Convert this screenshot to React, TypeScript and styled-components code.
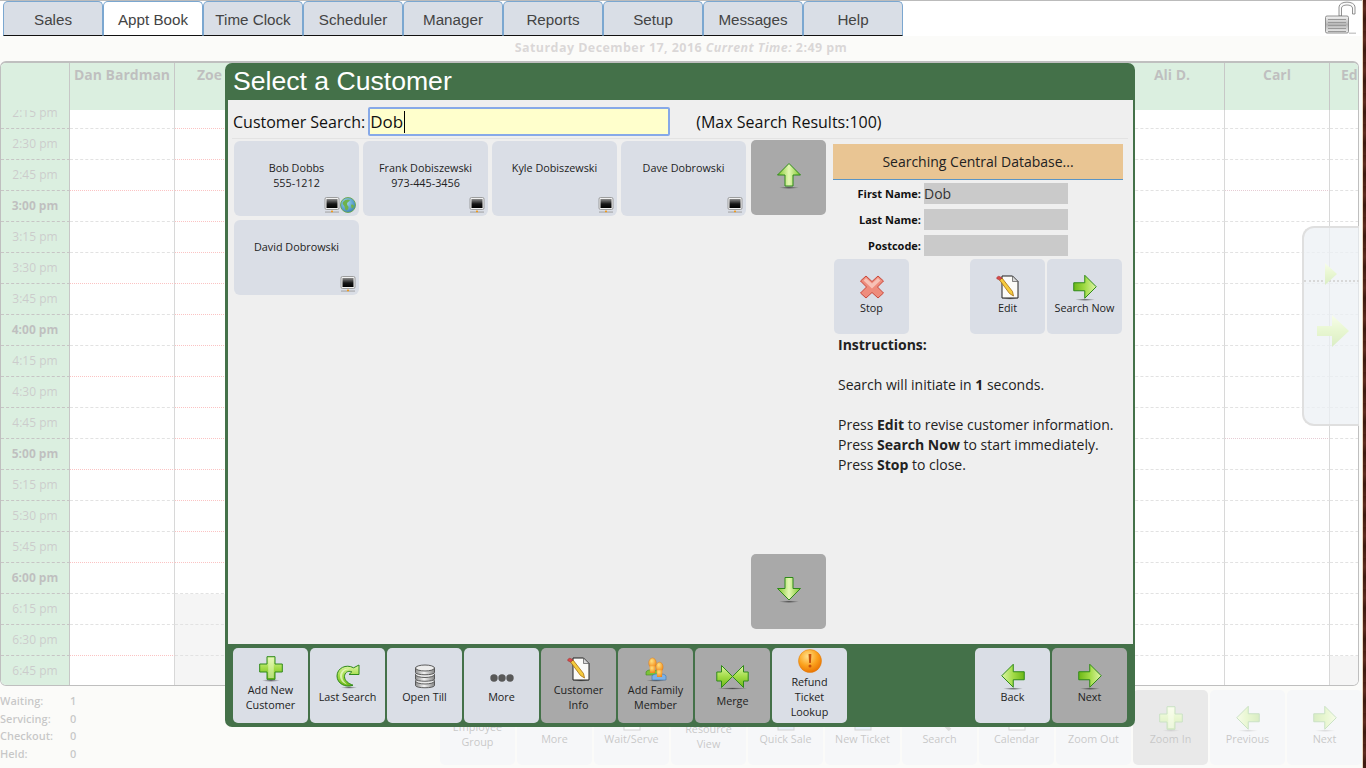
import { ReactNode } from 'react';
import styled, { createGlobalStyle } from 'styled-components';

const GlobalStyle = createGlobalStyle`
	html {
		background: repeating-linear-gradient(180deg, #4a1f14 0, #5f2c20 9px, #3d1a10 19px, #54261a 31px);
	}
	body {
		margin: 0;
		width: 1363px;
		height: 768px;
		overflow: hidden;
		font-family: 'Open Sans', 'Liberation Sans', sans-serif;
	}
`;

const Page = styled.div`
	position: relative;
	width: 1363px;
	height: 768px;
	overflow: hidden;
	box-sizing: border-box;
	border-right: 1px solid #ead9c2;
	background: #efefe7;
`;

/* ---- top tabs ---- */

const TopBar = styled.div`
	position: relative;
	z-index: 3;
	display: flex;
	justify-content: space-between;
	height: 36px;
	box-sizing: border-box;
	padding: 0 5px 0 3px;
	background: #fff;
	border-top: 1px solid #bbb;
`;

const Tabs = styled.div`
	display: flex;
`;

const Tab = styled.div<{ $active?: boolean }>`
	width: 100px;
	box-sizing: border-box;
	display: flex;
	align-items: center;
	justify-content: center;
	height: 35px;
	padding-top: 2px;
	border: 1px solid #7ba7d0;
	border-bottom: 1px solid #111;
	border-radius: 5px 5px 0 0;
	background: ${p => (p.$active ? '#fff' : '#d9dee6')};
	color: #444;
	font: 15.2px 'Liberation Sans', Arial, sans-serif;
`;

const DateLine = styled.div`
	height: 25px;
	line-height: 23px;
	text-align: center;
	font-size: 12.5px;
	font-weight: 700;
	letter-spacing: 0.43px;
	color: #6b6060;
`;

/* ---- calendar behind the dialog ---- */

const Calendar = styled.div`
	width: 1359px;
	height: 625px;
	box-sizing: border-box;
	overflow: hidden;
	background: #fff;
	border: 1px solid #000;
	border-top-width: 2px;
	border-radius: 6px;
`;

const HeadRow = styled.div`
	position: relative;
	z-index: 1;
	display: flex;
	height: 47px;
`;

const TimeHead = styled.div`
	flex: 0 0 69px;
	box-sizing: border-box;
	background: #6fbf83;
	border-right: 1px solid #222;
`;

const ColHead = styled.div<{ $inset?: number }>`
	flex: 0 0 105px;
	box-sizing: border-box;
	padding: 2px 0 0 ${p => p.$inset ?? 0}px;
	text-align: ${p => (p.$inset ? 'left' : 'center')};
	background: #6fbf83;
	border-right: 1px solid #222;
	font-size: 14px;
	line-height: 20px;
	font-weight: 700;
	color: #000;
`;

const Rows = styled.div`
	margin-top: -12px;
`;

const Row = styled.div`
	display: flex;
	height: 31px;
`;

const TimeCell = styled.div<{ $hour: boolean }>`
	flex: 0 0 69px;
	box-sizing: border-box;
	background: #6fbf83;
	border-right: 1px solid #222;
	border-bottom: 1px dashed #201818;
	text-align: center;
	font-size: 12px;
	line-height: 30px;
	font-weight: ${p => (p.$hour ? 700 : 400)};
	color: ${p => (p.$hour ? '#000' : '#333')};
`;

const Slot = styled.div<{ $line: 'dash' | 'red' | 'plum'; $off: boolean }>`
	flex: 0 0 105px;
	box-sizing: border-box;
	background: ${p => (p.$off ? '#d7d7d7' : '#fff')};
	border-right: 1px solid #646464;
	border-bottom: 1px ${p => (p.$line === 'dash' ? 'dashed' : 'dotted')}
		${p => (p.$line === 'dash' ? '#8c8c8c' : p.$line === 'red' ? '#ee1111' : '#9b3753')};
`;

const BottomBar = styled.div`
	display: flex;
	justify-content: space-between;
	height: 82px;
	box-sizing: border-box;
	padding-top: 4px;
`;

const Stats = styled.div`
	display: grid;
	grid-template-columns: 70px auto;
	grid-auto-rows: 17.7px;
	align-content: start;
	padding-top: 2px;
	font-size: 11px;
	line-height: 18px;
	font-weight: 600;
	color: #222;
`;

const BackTools = styled.div`
	display: flex;
	gap: 2px;
	align-items: flex-start;
`;

const SidePanel = styled.div`
	position: absolute;
	z-index: 1;
	top: 226px;
	left: 1302px;
	width: 57px;
	height: 200px;
	box-sizing: border-box;
	display: flex;
	flex-direction: column;
	background: rgba(180, 196, 214, 0.75);
	border: 2px solid #808080;
	border-right: 0;
	border-radius: 12px 0 0 12px;
`;

const PanelTop = styled.div`
	height: 52px;
	display: flex;
	align-items: flex-end;
	padding-left: 21px;
	border-bottom: 2px dotted #666;
`;

const SmallArrow = styled.svg`
	margin-bottom: -5px;
`;

const PanelBottom = styled.div`
	flex: 1;
	display: flex;
	align-items: center;
	justify-content: center;
	padding: 0 0 44px 2px;
`;

const Mask = styled.div`
	position: absolute;
	z-index: 2;
	inset: 36px 0 0 0;
	background: rgba(255, 255, 255, 0.75);
`;

/* ---- dialog ---- */

const Modal = styled.div`
	position: absolute;
	z-index: 4;
	top: 63px;
	left: 225px;
	width: 910px;
	height: 664px;
	display: flex;
	flex-direction: column;
	background: #447149;
	border-radius: 7px;
`;

const Title = styled.div`
	height: 37px;
	padding-left: 8px;
	color: #fff;
	font: 26.6px/37px 'Liberation Sans', Arial, sans-serif;
`;

const Body = styled.div`
	flex: 1;
	margin: 0 2px 0 3px;
	min-height: 0;
	background: #efefef;
	color: #111;
`;

const SearchRow = styled.div`
	display: flex;
	align-items: center;
	height: 39px;
	box-sizing: border-box;
	margin: 0 5px 0 4px;
	padding: 5px 0 0 1px;
	border-bottom: 1px solid #e3e3e3;
	font-size: 16px;
`;

const SearchBox = styled.div`
	width: 302px;
	height: 29px;
	margin: 0 26px 0 3px;
	box-sizing: border-box;
	display: flex;
	align-items: center;
	background: #ffffcc;
	border: 2px solid #87a9e8;
	border-radius: 2px;
	font-size: 17px;
`;

const Caret = styled.span`
	display: inline-block;
	width: 1px;
	height: 22px;
	margin-left: 1px;
	background: #000;
`;

const Main = styled.div`
	display: flex;
	height: 505px;
	padding-left: 6px;
`;

const Results = styled.div`
	width: 517px;
	padding-top: 2px;
	display: flex;
	flex-wrap: wrap;
	align-content: flex-start;
	gap: 4px;
`;

const Card = styled.div`
	position: relative;
	width: 125px;
	height: 75px;
	box-sizing: border-box;
	padding-top: 19px;
	text-align: center;
	background: #dadee6;
	border-radius: 6px;
	font-size: 10.8px;
	line-height: 15px;
	color: #222;
`;

const CardBadges = styled.div`
	position: absolute;
	right: 3px;
	bottom: 3px;
	display: flex;
	height: 16px;
`;

const ScrollCol = styled.div`
	width: 75px;
	height: 489px;
	padding-top: 1px;
	display: flex;
	flex-direction: column;
	justify-content: space-between;
`;

const Side = styled.div`
	width: 290px;
	margin-left: 7px;
	padding-top: 5px;
	font-size: 14px;
	line-height: 20px;
	color: #222;
`;

const Status = styled.div`
	height: 36px;
	box-sizing: border-box;
	text-align: center;
	line-height: 35px;
	background: #e9c593;
	border-bottom: 1px solid #5b95c5;
`;

const Form = styled.div`
	display: grid;
	grid-template-columns: 88px 144px;
	grid-auto-rows: 21px;
	column-gap: 3px;
	row-gap: 5px;
	margin-top: 3px;
`;

const Label = styled.div`
	text-align: right;
	font-size: 11px;
	font-weight: 700;
	line-height: 21px;
	color: #111;
`;

const Field = styled.div`
	background: #cacaca;
	font-size: 14px;
	line-height: 21px;
	color: #333;
`;

const Actions = styled.div`
	display: flex;
	gap: 2px;
	margin: 3px 1px 1px;
	& > :first-child {
		margin-right: auto;
	}
`;

const Help = styled.div`
	padding-left: 5px;
	p {
		margin: 0 0 20px;
	}
`;

const Footer = styled.div`
	display: flex;
	gap: 2px;
	height: 83px;
	box-sizing: border-box;
	padding: 4px 8px;
`;

const FooterGap = styled.div`
	flex: 1;
`;

const Tool = styled.div<{ $gray?: boolean }>`
	flex: 0 0 75px;
	width: 75px;
	height: 75px;
	box-sizing: border-box;
	padding-bottom: 3px;
	display: flex;
	flex-direction: column;
	align-items: center;
	justify-content: center;
	text-align: center;
	background: ${p => (p.$gray ? '#a9a9a9' : '#dadee6')};
	border-radius: 5px;
	font-size: 10.8px;
	line-height: 15px;
	color: #222;
`;

const IconSlot = styled.div<{ $h: number }>`
	height: ${p => p.$h}px;
	display: flex;
	align-items: center;
	justify-content: center;
`;

/* ---- icons ---- */

function Defs() {
	return (
		<svg width="0" height="0" style={{ position: 'absolute' }}>
			<defs>
				<linearGradient id="leaf" x1="0" y1="0" x2="0" y2="1">
					<stop offset="0" stopColor="#dff5a8" />
					<stop offset="0.5" stopColor="#a3dc48" />
					<stop offset="1" stopColor="#6cb716" />
				</linearGradient>
				<linearGradient id="leafSide" x1="0" y1="0" x2="1" y2="0">
					<stop offset="0" stopColor="#7cc426" />
					<stop offset="0.5" stopColor="#e4f8b4" />
					<stop offset="1" stopColor="#7cc426" />
				</linearGradient>
				<linearGradient id="steel" x1="0" y1="0" x2="1" y2="0">
					<stop offset="0" stopColor="#8d8d8d" />
					<stop offset="0.45" stopColor="#f4f4f4" />
					<stop offset="1" stopColor="#858585" />
				</linearGradient>
				<linearGradient id="screen" x1="0" y1="0" x2="0" y2="1">
					<stop offset="0" stopColor="#8a8a8a" />
					<stop offset="0.55" stopColor="#161616" />
					<stop offset="1" stopColor="#000" />
				</linearGradient>
				<radialGradient id="warn" cx="0.4" cy="0.3" r="0.75">
					<stop offset="0" stopColor="#ffe08a" />
					<stop offset="0.55" stopColor="#fba21d" />
					<stop offset="1" stopColor="#e86f00" />
				</radialGradient>
				<radialGradient id="shade">
					<stop offset="0" stopColor="#000" stopOpacity="0.55" />
					<stop offset="1" stopColor="#000" stopOpacity="0" />
				</radialGradient>
				<radialGradient id="person" cx="0.4" cy="0.3" r="0.8">
					<stop offset="0" stopColor="#ffe27e" />
					<stop offset="1" stopColor="#f27d0c" />
				</radialGradient>
				<radialGradient id="sea" cx="0.4" cy="0.35" r="0.8">
					<stop offset="0" stopColor="#9fd8f0" />
					<stop offset="1" stopColor="#2773b0" />
				</radialGradient>
				<linearGradient id="lockBody" x1="0" y1="0" x2="0" y2="1">
					<stop offset="0" stopColor="#f6f6f6" />
					<stop offset="0.5" stopColor="#b5b5b5" />
					<stop offset="1" stopColor="#f0f0f0" />
				</linearGradient>
			</defs>
		</svg>
	);
}

const ARROW_UP = 'M12 .5 L23.5 12 H16 V23 H8 V12 H.5 Z';

function Arrow({ dir, size = 24 }: { dir: 'up' | 'down' | 'left' | 'right'; size?: number }) {
	const turn = { up: 0, right: 90, down: 180, left: -90 }[dir];
	const side = dir === 'up' || dir === 'down';
	return (
		<svg width={size} height={size + 2} viewBox="0 0 24 26">
			<ellipse cx="12" cy="24.7" rx="10" ry="1.3" fill="url(#shade)" />
			<g transform={`rotate(${turn} 12 11.75)`}>
				<path d={ARROW_UP} fill={side ? 'url(#leafSide)' : 'url(#leaf)'} stroke="#2f8a1a" strokeLinejoin="round" />
			</g>
		</svg>
	);
}

function PlusIcon() {
	return (
		<svg width="24" height="26" viewBox="0 0 24 26">
			<ellipse cx="12" cy="24.5" rx="9" ry="1.5" fill="url(#shade)" />
			<path
				d="M8 .7 H16 V8 H23.3 V16 H16 V23.3 H8 V16 H.7 V8 H8 Z"
				fill="url(#leaf)"
				stroke="#2f8a1a"
				strokeLinejoin="round"
			/>
			<path d="M9.2 2 H14.8 V22 H9.2 Z" fill="#eefbc9" opacity="0.55" />
		</svg>
	);
}

function CurveIcon() {
	return (
		<svg width="24" height="25" viewBox="0 0 24 25">
			<ellipse cx="13" cy="23.5" rx="8" ry="1.3" fill="url(#shade)" />
			<path
				d="M23 1 V10.5 H13 L15.8 7.8 C11.5 6.2 8.5 9 8.5 12.6 C8.5 16.6 12.5 19.6 17 21.2 C9.5 24 1 19.6 1 12 C1 4.2 10 -.4 17.6 3.8 Z"
				fill="url(#leaf)"
				stroke="#2f8a1a"
				strokeLinejoin="round"
			/>
			<path d="M4 12 C4 7 9 3.6 14 5 C9 5 6 8 6.2 12.6 C6.4 16 8.6 18.6 11 20.4 C7 19.6 4 16 4 12 Z" fill="#f2fcd6" opacity="0.7" />
		</svg>
	);
}

function DiskIcon() {
	const disk = (y: number) => (
		<g key={y}>
			<path
				d={`M1.5 ${y + 3} V${y + 7.5} C1.5 ${y + 10.5} 20.5 ${y + 10.5} 20.5 ${y + 7.5} V${y + 3} Z`}
				fill="url(#steel)"
				stroke="#4d4d4d"
				strokeWidth="0.9"
			/>
			<ellipse cx="11" cy={y + 3} rx="9.5" ry="3" fill="#ececec" stroke="#4d4d4d" strokeWidth="0.9" />
		</g>
	);
	return (
		<svg width="22" height="25" viewBox="0 0 22 25">
			{[14, 7.5, 1].map(disk)}
		</svg>
	);
}

function DotsIcon() {
	return (
		<svg width="24" height="25" viewBox="0 0 24 25">
			{[4, 12, 20].map(x => (
				<circle key={x} cx={x} cy="14" r="3.7" fill="#585858" />
			))}
		</svg>
	);
}

function DocIcon() {
	return (
		<svg width="24" height="25" viewBox="0 0 24 25">
			<ellipse cx="14" cy="23.5" rx="9" ry="1.2" fill="url(#shade)" />
			<path d="M6 1 H16.5 L22 6.5 V23 H6 Z" fill="#fbfbf8" stroke="#222" strokeLinejoin="round" />
			<path d="M16.5 1 V6.5 H22 Z" fill="#d8d8d8" stroke="#555" strokeWidth="0.7" />
			<path d="M3.5 5 L6 3 L16.5 16.5 L17.5 21 L13.5 18.5 Z" fill="#f5cb3d" stroke="#a66e12" strokeWidth="0.8" />
			<path d="M0.8 3.8 A2 2 0 0 1 3.8 1.6 L6 3 L3.5 5 Z" fill="#d84a4a" stroke="#9c2a2a" strokeWidth="0.5" />
		</svg>
	);
}

function FamilyIcon() {
	return (
		<svg width="22" height="25" viewBox="0 0 22 25">
			<ellipse cx="11" cy="23.7" rx="10" ry="1" fill="url(#shade)" />
			<path d="M1 15 C2 12 12 12 13 15 V18 H1 Z" fill="#7cc23a" stroke="#3f8a1c" strokeWidth="0.6" />
			<ellipse cx="7.5" cy="6" rx="3.8" ry="5" fill="url(#person)" stroke="#d8750c" strokeWidth="0.4" />
			<path d="M4.5 9 H10.5 L10 16 H5 Z" fill="url(#person)" />
			<path d="M7 19 C8 16 20 16 21 19 V23 H7 Z" fill="#7db2e6" stroke="#3d74ae" strokeWidth="0.6" />
			<ellipse cx="14.5" cy="10" rx="3.6" ry="4.8" fill="url(#person)" stroke="#d8750c" strokeWidth="0.4" />
			<path d="M11.6 13 H17.4 L17 20 H12 Z" fill="url(#person)" />
		</svg>
	);
}

function MergeIcon() {
	return (
		<svg width="33" height="30" viewBox="0 0 33 30">
			<ellipse cx="16.5" cy="26.5" rx="15" ry="1.2" fill="url(#shade)" />
			<path d="M.8 10 H5.5 V3.5 L16.5 14.5 L5.5 25.5 V19 H.8 Z" fill="url(#leaf)" stroke="#2f8a1a" strokeLinejoin="round" />
			<path d="M32.2 10 H27.5 V3.5 L16.5 14.5 L27.5 25.5 V19 H32.2 Z" fill="url(#leaf)" stroke="#2f8a1a" strokeLinejoin="round" />
		</svg>
	);
}

function WarnIcon() {
	return (
		<svg width="24" height="25" viewBox="0 0 24 25">
			<circle cx="12" cy="12" r="11.5" fill="url(#warn)" stroke="#e07a08" strokeWidth="0.5" />
			<path d="M10.6 5 H13.4 L12.9 14 H11.1 Z" fill="#c8500a" />
			<circle cx="12" cy="17" r="1.5" fill="#c8500a" />
		</svg>
	);
}

function StopIcon() {
	return (
		<svg width="24" height="25" viewBox="0 0 24 25">
			<path
				d="M6 1 L12 6.5 L18 1 L23.5 6 L17.5 12 L23.5 18 L18 23 L12 17.5 L6 23 L.5 18 L6.5 12 L.5 6 Z"
				fill="#ee8c7c"
				stroke="#c9473a"
				strokeLinejoin="round"
			/>
			<path d="M6 3 L12 8.5 L18 3 L20.5 5.5 L12 13.5 L3.5 5.5 Z" fill="#fbd8cf" opacity="0.7" />
		</svg>
	);
}

function Monitor() {
	return (
		<svg width="16" height="16" viewBox="0 0 16 16">
			<rect x="1" y="0.5" width="14" height="12" rx="1.5" fill="#f1f1f1" stroke="#8a8a8a" strokeWidth="0.8" />
			<rect x="2.5" y="2" width="11" height="9" fill="url(#screen)" />
			<rect x="1" y="14.6" width="14" height="0.9" fill="#9a9a9a" />
			<rect x="7" y="13.6" width="2" height="1.6" fill="#ef9a1d" />
		</svg>
	);
}

function Globe() {
	return (
		<svg width="16" height="16" viewBox="0 0 16 16">
			<circle cx="8" cy="8" r="7.5" fill="url(#sea)" stroke="#6aa84a" strokeWidth="0.9" />
			<path d="M3 5 C5 2 9 2 10 3 C9 5 7 5 7 7 C7 9 9 9 8.5 11 C8 13 6.5 14 5.5 13 C4.5 11 5 9 3.5 8 C2.5 7 2.5 6 3 5 Z" fill="#6fb24a" />
			<path d="M11 8 C12.5 7 14 8 14 9.5 C13.5 11 12 12 11.5 11 Z" fill="#6fb24a" />
		</svg>
	);
}

function Lock() {
	return (
		<svg width="32" height="33" viewBox="0 0 32 33">
			<path d="M14 15 V6 C14 -.5 30 -.5 30 6 V13 H27.5 V7 C27.5 3 16.5 3 16.5 7 V15 Z" fill="#fafafa" stroke="#777" strokeWidth="0.8" />
			<rect x="0.5" y="15" width="23" height="17" rx="1.5" fill="url(#lockBody)" stroke="#777" strokeWidth="0.8" />
			{[18, 21, 24, 27, 30].map(y => (
				<rect key={y} x="3" y={y} width="18" height="1" fill="#999" />
			))}
			<rect x="24" y="31.5" width="7" height="1.5" fill="#ccc" />
		</svg>
	);
}

function Sheet({ color = '#fff' }: { color?: string }) {
	return (
		<svg width="24" height="25" viewBox="0 0 24 25">
			<rect x="4" y="3" width="16" height="21" fill={color} stroke="#555" />
		</svg>
	);
}

function Lens() {
	return (
		<svg width="24" height="25" viewBox="0 0 24 25">
			<circle cx="9" cy="10" r="7" fill="none" stroke="#777" strokeWidth="2" />
			<path d="M14 16 L22 24" stroke="#777" strokeWidth="3.5" />
		</svg>
	);
}

/* ---- pieces ---- */

function ToolButton({
	icon,
	h = 25,
	gray,
	children,
}: {
	icon?: ReactNode;
	h?: number;
	gray?: boolean;
	children?: ReactNode;
}) {
	return (
		<Tool $gray={gray}>
			<IconSlot $h={h}>{icon}</IconSlot>
			{children && <div>{children}</div>}
		</Tool>
	);
}

const TAB_NAMES = ['Sales', 'Appt Book', 'Time Clock', 'Scheduler', 'Manager', 'Reports', 'Setup', 'Messages', 'Help'];

const COLUMNS = ['Dan Bardman', 'Zoe', '', '', '', '', '', '', '', '', 'Ali D.', 'Carl', 'Ed'];

const COLUMN_INSET: Record<string, number> = { Zoe: 22, Ed: 11 };

const TIMES = [
	'2:15 pm', '2:30 pm', '2:45 pm', '3:00 pm', '3:15 pm', '3:30 pm', '3:45 pm',
	'4:00 pm', '4:15 pm', '4:30 pm', '4:45 pm', '5:00 pm', '5:15 pm', '5:30 pm', '5:45 pm',
	'6:00 pm', '6:15 pm', '6:30 pm', '6:45 pm',
];

function slotLine(col: number, row: number): 'dash' | 'red' | 'plum' {
	if (col === 0 && row % 3 === 2) return 'red';
	if (col === 1 && row <= 14) return 'red';
	if (col === 11 && (row === 2 || row === 10)) return 'plum';
	return 'dash';
}

function slotOff(col: number, row: number) {
	return (col === 1 && row >= 16) || (col === 12 && row >= 18);
}

const CUSTOMERS = [
	{ name: 'Bob Dobbs', phone: '555-1212', web: true },
	{ name: 'Frank Dobiszewski', phone: '973-445-3456' },
	{ name: 'Kyle Dobiszewski' },
	{ name: 'Dave Dobrowski' },
	{ name: 'David Dobrowski' },
];

export default function App() {
	return (
		<Page>
			<GlobalStyle />
			<Defs />
			<TopBar>
				<Tabs>
					{TAB_NAMES.map(t => (
						<Tab key={t} $active={t === 'Appt Book'}>
							{t}
						</Tab>
					))}
				</Tabs>
				<Lock />
			</TopBar>

			<DateLine>
				Saturday December 17, 2016 <i>Current Time:</i> 2:49 pm
			</DateLine>

			<Calendar>
				<HeadRow>
					<TimeHead />
					{COLUMNS.map((c, i) => (
						<ColHead key={i} $inset={COLUMN_INSET[c]}>
							{c}
						</ColHead>
					))}
				</HeadRow>
				<Rows>
					{TIMES.map((t, r) => (
						<Row key={t}>
							<TimeCell $hour={t.includes(':00')}>{t}</TimeCell>
							{COLUMNS.map((_, c) => (
								<Slot key={c} $line={slotLine(c, r)} $off={slotOff(c, r)} />
							))}
						</Row>
					))}
				</Rows>
			</Calendar>

			<BottomBar>
				<Stats>
					<span>Waiting:</span>
					<span>1</span>
					<span>Servicing:</span>
					<span>0</span>
					<span>Checkout:</span>
					<span>0</span>
					<span>Held:</span>
					<span>0</span>
				</Stats>
				<BackTools>
					<ToolButton h={16}>
						Employee
						<br />
						Group
					</ToolButton>
					<ToolButton icon={<DotsIcon />}>More</ToolButton>
					<ToolButton icon={<Sheet />}>Wait/Serve</ToolButton>
					<ToolButton h={20}>
						Resource
						<br />
						View
					</ToolButton>
					<ToolButton icon={<Sheet color="#9fc0ea" />}>Quick Sale</ToolButton>
					<ToolButton icon={<Sheet color="#9fc0ea" />}>New Ticket</ToolButton>
					<ToolButton icon={<Lens />}>Search</ToolButton>
					<ToolButton icon={<Sheet />}>Calendar</ToolButton>
					<ToolButton>Zoom Out</ToolButton>
					<ToolButton gray icon={<PlusIcon />}>
						Zoom In
					</ToolButton>
					<ToolButton icon={<Arrow dir="left" />}>Previous</ToolButton>
					<ToolButton icon={<Arrow dir="right" />}>Next</ToolButton>
				</BackTools>
			</BottomBar>

			<SidePanel>
				<PanelTop>
					<SmallArrow width="12" height="22" viewBox="0 0 12 22">
						<path d="M0 0 L12 11 L0 22 Z" fill="url(#leaf)" />
					</SmallArrow>
				</PanelTop>
				<PanelBottom>
					<svg width="32" height="32" viewBox="0 0 32 32">
						<path d="M0 11 H15 V0 L32 16 L15 32 V21 H0 Z" fill="url(#leaf)" />
					</svg>
				</PanelBottom>
			</SidePanel>

			<Mask />

			<Modal>
				<Title>Select a Customer</Title>
				<Body>
					<SearchRow>
						Customer Search:
						<SearchBox>
							Dob
							<Caret />
						</SearchBox>
						(Max Search Results:100)
					</SearchRow>
					<Main>
						<Results>
							{CUSTOMERS.map(c => (
								<Card key={c.name}>
									{c.name}
									{c.phone && <div>{c.phone}</div>}
									<CardBadges>
										<Monitor />
										{c.web && <Globe />}
									</CardBadges>
								</Card>
							))}
						</Results>
						<ScrollCol>
							<ToolButton gray icon={<Arrow dir="up" />} />
							<ToolButton gray icon={<Arrow dir="down" />} />
						</ScrollCol>
						<Side>
							<Status>Searching Central Database...</Status>
							<Form>
								<Label>First Name:</Label>
								<Field>Dob</Field>
								<Label>Last Name:</Label>
								<Field />
								<Label>Postcode:</Label>
								<Field />
							</Form>
							<Actions>
								<ToolButton icon={<StopIcon />}>Stop</ToolButton>
								<ToolButton icon={<DocIcon />}>Edit</ToolButton>
								<ToolButton icon={<Arrow dir="right" />}>Search Now</ToolButton>
							</Actions>
							<Help>
								<p>
									<b>Instructions:</b>
								</p>
								<p>
									Search will initiate in <b>1</b> seconds.
								</p>
								<div>
									Press <b>Edit</b> to revise customer information.
								</div>
								<div>
									Press <b>Search Now</b> to start immediately.
								</div>
								<div>
									Press <b>Stop</b> to close.
								</div>
							</Help>
						</Side>
					</Main>
				</Body>
				<Footer>
					<ToolButton icon={<PlusIcon />}>
						Add New
						<br />
						Customer
					</ToolButton>
					<ToolButton icon={<CurveIcon />}>Last Search</ToolButton>
					<ToolButton icon={<DiskIcon />}>Open Till</ToolButton>
					<ToolButton icon={<DotsIcon />}>More</ToolButton>
					<ToolButton gray icon={<DocIcon />}>
						Customer
						<br />
						Info
					</ToolButton>
					<ToolButton gray icon={<FamilyIcon />}>
						Add Family
						<br />
						Member
					</ToolButton>
					<ToolButton gray h={33} icon={<MergeIcon />}>
						Merge
					</ToolButton>
					<ToolButton icon={<WarnIcon />}>
						Refund
						<br />
						Ticket
						<br />
						Lookup
					</ToolButton>
					<FooterGap />
					<ToolButton icon={<Arrow dir="left" />}>Back</ToolButton>
					<ToolButton gray icon={<Arrow dir="right" />}>
						Next
					</ToolButton>
				</Footer>
			</Modal>
		</Page>
	);
}
